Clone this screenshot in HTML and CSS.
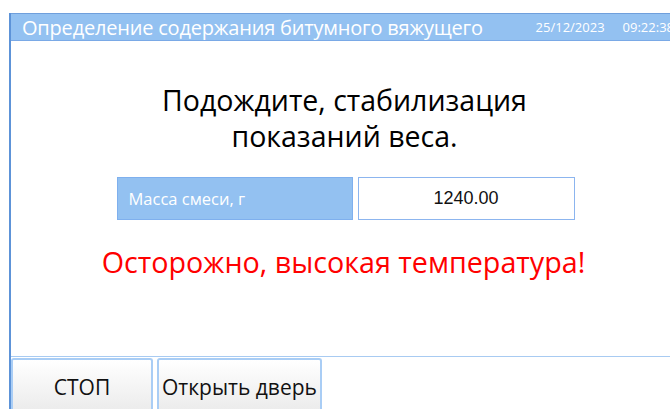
FILE: index.html
```html
<!DOCTYPE html>
<html lang="ru">
<head>
<meta charset="utf-8">
<title>Определение содержания битумного вяжущего</title>
<link rel="stylesheet" href="styles.css">
</head>
<body>
<div class="window">
  <header class="titlebar">
    <span class="title">Определение содержания битумного вяжущего</span>
    <span class="date">25/12/2023</span>
    <span class="time">09:22:38</span>
  </header>
  <main class="content">
    <h1 class="message">Подождите, стабилизация<br>показаний веса.</h1>
    <div class="field">
      <div class="field-label">Масса смеси, г</div>
      <div class="field-value">1240.00</div>
    </div>
    <p class="warning">Осторожно, высокая температура!</p>
  </main>
  <footer class="buttons">
    <button class="btn btn-stop">СТОП</button>
    <button class="btn btn-door">Открыть дверь</button>
  </footer>
</div>
</body>
</html>
```
FILE: styles.css
```css
html, body {
  margin: 0;
  padding: 0;
  background: #fff;
  overflow: hidden;
}

body {
  width: 670px;
  height: 409px;
  padding-top: 13px;
  box-sizing: border-box;
  font-family: "Open Sans", "Noto Sans", sans-serif;
}

.window {
  margin-left: 9px;
  height: 396px;
  display: flex;
  flex-direction: column;
  border-left: 2px solid #5d93d8;
  box-sizing: border-box;
}

.titlebar {
  height: 28px;
  flex: none;
  display: flex;
  align-items: center;
  background: #93c1f1;
  border-top: 1px solid #6f9fdc;
  border-bottom: 1px solid #7aa9e6;
  box-sizing: border-box;
  color: #fff;
  white-space: nowrap;
  overflow: hidden;
}

.title {
  font-size: 20px;
  margin-left: 11px;
  letter-spacing: -0.2px;
}

.date {
  font-size: 13px;
  margin-left: auto;
  padding-left: 20px;
}

.time {
  font-size: 13px;
  margin-left: 18px;
  margin-right: -4px;
}

.content {
  flex: 1;
  display: flex;
  flex-direction: column;
  align-items: center;
}

.message {
  margin: 41px 0 0 0;
  font-weight: normal;
  font-size: 28.5px;
  line-height: 36px;
  text-align: center;
  color: #000;
  padding-left: 8px;
}

.field {
  display: flex;
  gap: 5px;
  margin-top: 23px;
  margin-left: 10px;
}

.field-label {
  width: 236px;
  height: 43px;
  box-sizing: border-box;
  background: #93c1f1;
  border: 1px solid #7fb0ee;
  color: #fff;
  font-size: 16.5px;
  display: flex;
  align-items: center;
  padding-left: 11px;
}

.field-value {
  width: 217px;
  height: 43px;
  box-sizing: border-box;
  border: 1px solid #8cb5ef;
  background: #fff;
  color: #111;
  font-family: "Liberation Sans", Arial, sans-serif;
  font-size: 18px;
  display: flex;
  align-items: center;
  justify-content: center;
}

.warning {
  margin: 22px 0 0 0;
  font-size: 28.7px;
  color: #ff0000;
  padding-left: 6px;
}

.buttons {
  flex: none;
  height: 53px;
  display: flex;
  gap: 4px;
  border-top: 1px solid #a8cbf2;
  padding-top: 1px;
  box-sizing: border-box;
}

.btn {
  height: 100%;
  border: 2px solid #a9cdf5;
  border-bottom: none;
  border-radius: 3px 3px 0 0;
  background: linear-gradient(#ffffff, #ececec);
  font-family: "Open Sans", "Noto Sans", sans-serif;
  font-size: 21px;
  color: #111;
  padding: 4px 0 0 0;
  box-sizing: border-box;
}

.btn-stop {
  width: 142px;
}

.btn-door {
  width: 165px;
}
```
